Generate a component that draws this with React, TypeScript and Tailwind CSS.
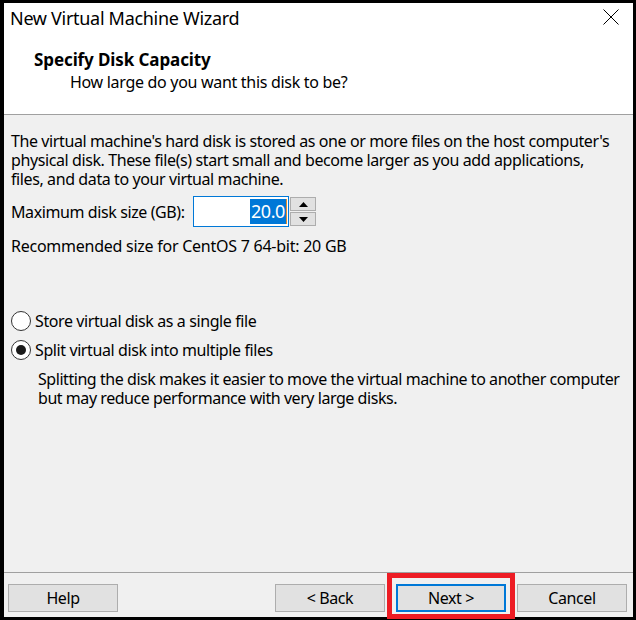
import React from "react";

const font = { fontFamily: '"Noto Sans", "Open Sans", sans-serif' };

function Radio({ checked, label }: { checked: boolean; label: string }) {
  return (
    <div className="flex h-[24px] items-center">
      <span className="flex h-[20px] w-[20px] items-center justify-center rounded-full border border-[#333333] bg-white">
        {checked && <span className="h-[10px] w-[10px] rounded-full bg-[#1a1a1a]" />}
      </span>
      <span className="ml-[4px]">{label}</span>
    </div>
  );
}

function Btn({ label, focused }: { label: string; focused?: boolean }) {
  return (
    <div
      className={
        "flex h-[28px] w-[110px] items-center justify-center bg-[#e1e1e1] " +
        (focused ? "border-2 border-[#0078d7]" : "border border-[#adadad]")
      }
    >
      {label}
    </div>
  );
}

export default function App() {
  return (
    <div
      className="relative h-[620px] w-[636px] overflow-hidden bg-black pb-[3px] pl-[4px] pr-[3px] pt-[3px] text-[16px] tracking-[-0.4px] text-black"
      style={font}
    >
      <div className="flex h-full flex-col bg-[#f0f0f0]">
        <div className="h-[112px] border-b border-[#a0a0a0] bg-white">
          <div className="flex items-start justify-between pl-[6px] pr-[14px] pt-[3px]">
            <div className="text-[18px] leading-[24px] tracking-[-0.3px]">New Virtual Machine Wizard</div>
            <svg className="mt-[3px]" width="16" height="16" viewBox="0 0 16 16">
              <path d="M0.5 0.5 L15.5 15.5 M15.5 0.5 L0.5 15.5" stroke="#000" strokeWidth="1" fill="none" />
            </svg>
          </div>
          <div className="mt-[19px] pl-[30px] text-[17px] font-bold leading-[22px] tracking-[-0.1px]">
            Specify Disk Capacity
          </div>
          <div className="pl-[66px] leading-[22px] tracking-[-0.3px]">How large do you want this disk to be?</div>
        </div>

        <div className="flex-1 pl-[7px] pt-[17px]">
          <div className="whitespace-nowrap leading-[19px]">
            <div>The virtual machine's hard disk is stored as one or more files on the host computer's</div>
            <div>physical disk. These file(s) start small and become larger as you add applications,</div>
            <div>files, and data to your virtual machine.</div>
          </div>

          <div className="mt-[7px] flex h-[31px] items-center">
            <span className="mt-[1px] w-[182px]">Maximum disk size (GB):</span>
            <div className="flex h-[31px] w-[96px] items-center justify-end border border-[#0078d7] bg-white pr-[1px]">
              <span className="relative flex h-[25px] items-center bg-[#0078d7] px-[1px] text-[18px] text-white">
                20.0
              </span>
              <span className="h-[25px] w-[1px] bg-[#e08a2a]" />
            </div>
            <div className="ml-[1px] flex h-[31px] w-[26px] flex-col justify-between py-[1px]">
              <div className="flex h-[14px] items-center justify-center border border-[#adadad] bg-[#e1e1e1]">
                <svg width="9" height="5" viewBox="0 0 9 5">
                  <path d="M4.5 0 L9 5 L0 5 Z" fill="#000" />
                </svg>
              </div>
              <div className="flex h-[14px] items-center justify-center border border-[#adadad] bg-[#e1e1e1]">
                <svg width="9" height="5" viewBox="0 0 9 5">
                  <path d="M0 0 L9 0 L4.5 5 Z" fill="#000" />
                </svg>
              </div>
            </div>
          </div>

          <div className="mt-[10px] leading-[19px] tracking-[-0.25px]">Recommended size for CentOS 7 64-bit: 20 GB</div>

          <div className="mt-[53px] flex flex-col gap-[5px]">
            <Radio checked={false} label="Store virtual disk as a single file" />
            <Radio checked={true} label="Split virtual disk into multiple files" />
          </div>
          <div className="mt-[8px] whitespace-nowrap pl-[27px] leading-[18.5px] tracking-[-0.45px]">
            <div>Splitting the disk makes it easier to move the virtual machine to another computer</div>
            <div>but may reduce performance with very large disks.</div>
          </div>
        </div>

        <div className="flex h-[45px] items-start border-t border-[#a0a0a0] pl-[4px] pr-[6px] pt-[11px]">
          <Btn label="Help" />
          <div className="flex-1" />
          <div className="flex gap-[11px]">
            <Btn label="< Back" />
            <Btn label="Next >" focused />
            <Btn label="Cancel" />
          </div>
        </div>
      </div>

      <div className="absolute left-[387px] top-[573px] h-[46px] w-[128px] border-[5px] border-[#ed1c24]" />
    </div>
  );
}
